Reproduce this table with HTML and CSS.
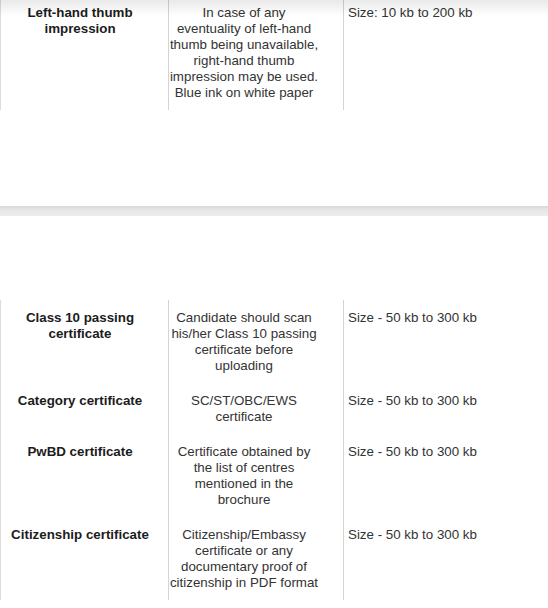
FILE: index.html
```html
<!DOCTYPE html>
<html>
<head>
<meta charset="utf-8">
<link rel="stylesheet" href="styles.css">
</head>
<body>
<div class="top-shadow"></div>
<div class="doc-table first">
  <div class="cell name">Left-hand thumb<br>impression</div>
  <div class="cell desc">In case of any<br>eventuality of left-hand<br>thumb being unavailable,<br>right-hand thumb<br>impression may be used.<br>Blue ink on white paper</div>
  <div class="cell size">Size: 10 kb to 200 kb</div>
</div>
<div class="separator"></div>
<div class="doc-table second">
  <div class="cell name">Class 10 passing<br>certificate</div>
  <div class="cell desc">Candidate should scan<br>his/her Class 10 passing<br>certificate before<br>uploading</div>
  <div class="cell size">Size - 50 kb to 300 kb</div>

  <div class="cell name">Category certificate</div>
  <div class="cell desc">SC/ST/OBC/EWS<br>certificate</div>
  <div class="cell size">Size - 50 kb to 300 kb</div>

  <div class="cell name">PwBD certificate</div>
  <div class="cell desc">Certificate obtained by<br>the list of centres<br>mentioned in the<br>brochure</div>
  <div class="cell size">Size - 50 kb to 300 kb</div>

  <div class="cell name">Citizenship certificate</div>
  <div class="cell desc">Citizenship/Embassy<br>certificate or any<br>documentary proof of<br>citizenship in PDF format</div>
  <div class="cell size">Size - 50 kb to 300 kb</div>
</div>
</body>
</html>
```
FILE: styles.css
```css
html, body {
  margin: 0;
  padding: 0;
  background: #ffffff;
}
body {
  font-family: "Liberation Sans", Arial, sans-serif;
  font-size: 13.33px;
  line-height: 16px;
  color: #333333;
  width: 548px;
  height: 608px;
  overflow: hidden;
}
.top-shadow {
  position: fixed;
  left: 0;
  top: 0;
  width: 100%;
  height: 16px;
  background: linear-gradient(to bottom, rgba(0,0,0,0.085), rgba(0,0,0,0));
  pointer-events: none;
}
.doc-table {
  display: grid;
  grid-template-columns: 169px 175px 1fr;
}
.cell {
  padding: 10px 0 9px 0;
  white-space: nowrap;
}
.name {
  border-left: 1px solid #dcdcdc;
  border-right: 1px solid #d4d4d4;
  padding-left: 5px;
  padding-right: 14px;
  text-align: center;
  font-weight: bold;
  color: #1c1c1c;
}
.desc {
  border-right: 1px solid #d4d4d4;
  padding-left: 0;
  padding-right: 24px;
  text-align: center;
}
.size {
  padding-left: 4px;
}
.first .cell {
  padding-top: 5px;
}
.separator {
  margin-top: 96px;
  height: 10px;
  background: linear-gradient(to bottom, #d8d8d8, #e6e6e6 35%, #ededed);
}
.second {
  margin-top: 84px;
}
```
